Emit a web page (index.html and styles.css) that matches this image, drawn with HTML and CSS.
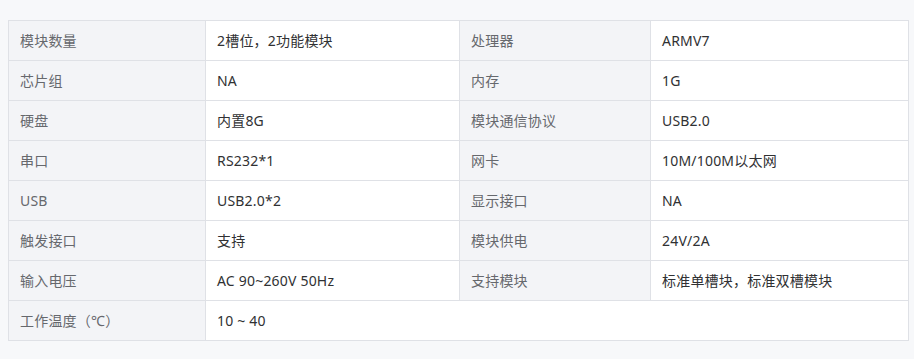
FILE: index.html
```html
<!DOCTYPE html>
<html lang="zh-CN">
<head>
<meta charset="utf-8">
<title>参数</title>
<link rel="stylesheet" href="styles.css">
</head>
<body>
<div class="page">
  <table class="spec">
    <colgroup>
      <col class="c1"><col class="c2"><col class="c3"><col class="c4">
    </colgroup>
    <tbody>
      <tr><th>模块数量</th><td>2槽位，2功能模块</td><th>处理器</th><td>ARMV7</td></tr>
      <tr><th>芯片组</th><td>NA</td><th>内存</th><td>1G</td></tr>
      <tr><th>硬盘</th><td>内置8G</td><th>模块通信协议</th><td>USB2.0</td></tr>
      <tr><th>串口</th><td>RS232*1</td><th>网卡</th><td>10M/100M以太网</td></tr>
      <tr><th>USB</th><td>USB2.0*2</td><th>显示接口</th><td>NA</td></tr>
      <tr><th>触发接口</th><td>支持</td><th>模块供电</th><td>24V/2A</td></tr>
      <tr><th>输入电压</th><td>AC 90~260V 50Hz</td><th>支持模块</th><td>标准单槽块，标准双槽模块</td></tr>
      <tr><th>工作温度（℃）</th><td colspan="3">10 ~ 40</td></tr>
    </tbody>
  </table>
</div>
</body>
</html>
```
FILE: styles.css
```css
html, body {
  margin: 0;
  padding: 0;
  background: #f7f8fa;
}
.page {
  padding: 20px 6px 19px 8px;
}
.spec {
  border-collapse: collapse;
  table-layout: fixed;
  width: 900px;
  font-family: "Noto Sans", "Noto Sans CJK SC", sans-serif;
  font-size: 14px;
}
.c1 { width: 197px; }
.c2 { width: 254px; }
.c3 { width: 191px; }
.c4 { width: 258px; }
.spec th, .spec td {
  border: 1px solid #dfe1e6;
  height: 40px;
  padding: 0 11px;
  text-align: left;
  vertical-align: middle;
  box-sizing: border-box;
  line-height: 20px;
  letter-spacing: 0.2px;
}
.spec th {
  background: #f3f4f7;
  color: #66686d;
  font-weight: normal;
}
.spec td {
  background: #ffffff;
  color: #303133;
}
```
